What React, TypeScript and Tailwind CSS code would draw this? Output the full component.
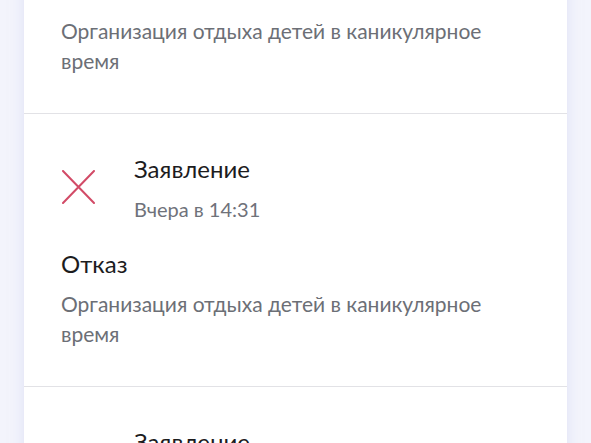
import React from "react";

type Entry = {
  kind: string;
  when: string;
  status: string;
  service: string;
  faded?: boolean;
};

const entries: Entry[] = [
  {
    kind: "Заявление",
    when: "Вчера в 15:02",
    status: "Отказ",
    service: "Организация отдыха детей в каникулярное время",
    faded: true,
  },
  {
    kind: "Заявление",
    when: "Вчера в 14:31",
    status: "Отказ",
    service: "Организация отдыха детей в каникулярное время",
  },
  {
    kind: "Заявление",
    when: "Вчера в 12:10",
    status: "Отказ",
    service: "Организация отдыха детей в каникулярное время",
  },
];

function RejectedIcon(): JSX.Element {
  return (
    <svg width="33" height="34" viewBox="0 0 33 34" fill="none">
      <path
        d="M1 1L32 33M32 1L1 33"
        stroke="#d24b67"
        strokeWidth="2"
        strokeLinecap="round"
      />
    </svg>
  );
}

function EntryRow({ entry }: { entry: Entry }): JSX.Element {
  return (
    <div className="border-b border-[#e2e2e6] pl-[37px] pr-[24px] pt-[40px] pb-[37px]">
      <div className="flex items-start">
        <div className="w-[73px] pt-[16px] pl-[1px]">
          <RejectedIcon />
        </div>
        <div>
          <div className="text-[24px] leading-[30px] text-[#1c1c1e]">
            {entry.kind}
          </div>
          <div className="mt-[10px] text-[20px] leading-[30px] text-[#6f727a]">
            {entry.when}
          </div>
        </div>
      </div>
      <div
        className={
          entry.faded
            ? "mt-[25px] text-[24px] leading-[30px] text-[#e6e7ee]"
            : "mt-[25px] text-[24px] leading-[30px] text-[#1c1c1e]"
        }
      >
        {entry.status}
      </div>
      <div className="mt-[10px] max-w-[440px] text-[21px] leading-[30px] text-[#6c6f76]">
        {entry.service}
      </div>
    </div>
  );
}

export default function App(): JSX.Element {
  return (
    <div
      className="h-[443px] overflow-hidden bg-[#f3f4fc] px-[24px]"
      style={{ fontFamily: "Lato, 'Noto Sans', sans-serif" }}
    >
      <div className="-mt-[159px] bg-white shadow-[0_0_12px_rgba(200,205,240,0.5)]">
        {entries.map((entry, i) => (
          <EntryRow key={i} entry={entry} />
        ))}
      </div>
    </div>
  );
}
